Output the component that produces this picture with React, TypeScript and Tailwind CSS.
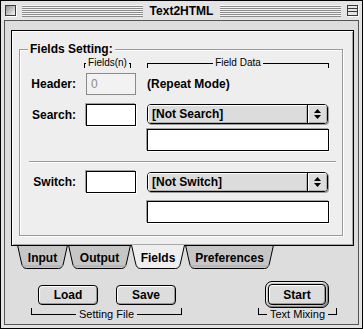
import React from 'react'

const sans = "font-['Liberation_Sans',Arial,sans-serif]"

function CloseBox() {
  return (
    <div className="w-[11px] h-[11px] shrink-0 border border-[#3a3a3a] bg-[linear-gradient(135deg,#8e8e8e,#f6f6f6)] shadow-[1px_1px_0_#fff]" />
  )
}

function CollapseBox() {
  return (
    <div className="w-[11px] h-[11px] shrink-0 border border-[#3a3a3a] bg-[#e4e4e4] shadow-[1px_1px_0_#fff] flex flex-col">
      <div className="h-[3px] border-b border-[#3a3a3a]" />
      <div className="h-[3px] border-b border-[#3a3a3a]" />
    </div>
  )
}

function Stripes() {
  return (
    <div className="flex-1 h-[12px] bg-[repeating-linear-gradient(to_bottom,#f6f6f6_0px,#f6f6f6_1px,#8a8a8a_1px,#8a8a8a_2px)]" />
  )
}

// label with a line on each side, ends ticked downward
function TopBracket({ label, className }: { label: string; className: string }) {
  return (
    <div className={`flex items-start h-[12px] ${className}`}>
      <div className="flex-1 mt-[6px] h-[5px] border-l border-t border-black" />
      <span className="px-[2px] text-[10px] leading-[12px] whitespace-nowrap">{label}</span>
      <div className="flex-1 mt-[6px] h-[5px] border-r border-t border-black" />
    </div>
  )
}

// label with a line on each side, ends ticked upward
function BottomBracket({ label }: { label: string }) {
  return (
    <div className="flex items-start h-[12px]">
      <div className="flex-1 h-[7px] border-l border-b border-black" />
      <span className="px-[3px] text-[11px] leading-[12px]">{label}</span>
      <div className="flex-1 h-[7px] border-r border-b border-black" />
    </div>
  )
}

function Field({ className = '' }: { className?: string }) {
  return (
    <div className={`h-[22px] border border-black bg-white shadow-[-1px_-1px_0_#a0a0a0,1px_1px_0_#fff] ${className}`} />
  )
}

function Popup({ label, className = '' }: { label: string; className?: string }) {
  return (
    <div className={`w-[181px] h-[20px] rounded-[4px] border border-black flex overflow-hidden shadow-[1px_1px_0_#9a9a9a] ${className}`}>
      <div className="flex-1 bg-[#dcdcdc] shadow-[inset_1px_1px_0_#fff,inset_-1px_-1px_0_#b0b0b0] text-[12px] font-bold leading-[18px] pl-[4px]">
        {label}
      </div>
      <div className="w-[20px] border-l border-black bg-[#dcdcdc] shadow-[inset_1px_1px_0_#fff,inset_-1px_-1px_0_#b0b0b0] flex items-center justify-center">
        <svg width="7" height="10" viewBox="0 0 7 10">
          <polygon points="0,4 3.5,0 7,4" fill="#000" />
          <polygon points="0,6 3.5,10 7,6" fill="#000" />
        </svg>
      </div>
    </div>
  )
}

function Btn({ label, className = '' }: { label: string; className?: string }) {
  return (
    <div className={`rounded-[4px] border border-black bg-[#dddddd] shadow-[inset_1px_1px_0_#fff,inset_-1px_-1px_0_#9a9a9a] flex items-center justify-center text-[12px] font-bold leading-none ${className}`}>
      {label}
    </div>
  )
}

function Tab({ label, w, active = false, className }: { label: string; w: number; active?: boolean; className: string }) {
  const h = 24
  const d = `M0.5,0 L4.5,${h - 6} Q5.5,${h - 0.5} 9.5,${h - 0.5} L${w - 9.5},${h - 0.5} Q${w - 5.5},${h - 0.5} ${w - 4.5},${h - 6} L${w - 0.5},0`
  return (
    <div className={`relative h-[24px] shrink-0 flex items-center justify-center pt-[2px] ${className}`}>
      <svg className="absolute inset-0" width={w} height={h} viewBox={`0 0 ${w} ${h}`}>
        <path d={d + ' Z'} fill={active ? '#eeeeee' : '#c6c6c6'} stroke="none" />
        <path d={d} fill="none" stroke="#000" strokeWidth="1" />
        {!active && <line x1="0" y1="0.5" x2={w} y2="0.5" stroke="#000" strokeWidth="1" />}
        {!active && <path d={`M5,${h - 3} L${w - 5},${h - 3}`} stroke="#a8a8a8" strokeWidth="1" />}
      </svg>
      <span className="relative text-[12px] font-bold leading-none">{label}</span>
    </div>
  )
}

export default function App() {
  return (
    <div className={`w-[363px] h-[329px] border border-black bg-[#e4e4e4] flex flex-col text-black select-none ${sans}`}>
      {/* Title bar */}
      <div className="h-[19px] shrink-0 flex items-center px-[4px] gap-[6px]">
        <CloseBox />
        <Stripes />
        <span className="text-[12px] font-bold leading-none px-[1px]">Text2HTML</span>
        <Stripes />
        <CollapseBox />
      </div>

      {/* Window body */}
      <div className="flex-1 mx-[3px] mb-[3px] border border-[#555] bg-[#dddddd] flex flex-col pl-[6px] pr-[4px] pt-[9px]">
        {/* Tab panel */}
        <div className="h-[216px] shrink-0 border border-black bg-[#eeeeee] shadow-[inset_1px_1px_0_#fff,inset_-1px_-1px_0_#a8a8a8] flex flex-col">
          <div className="relative mt-[18px] ml-[7px] mr-[10px] h-[187px] border border-[#9a9a9a] shadow-[1px_1px_0_#fff,inset_1px_1px_0_#fff] flex flex-col">
            <span className="absolute -top-[8px] left-[8px] px-[2px] bg-[#eeeeee] text-[12px] font-bold leading-[14px]">
              Fields Setting:
            </span>

            <div className="flex mt-[7px]">
              <div className="w-[64px]" />
              <TopBracket label="Fields(n)" className="w-[47px]" />
              <div className="w-[16px]" />
              <TopBracket label="Field Data" className="w-[182px]" />
            </div>

            {/* Header */}
            <div className="flex items-center h-[22px] mt-[4px]">
              <span className="w-[56px] text-right text-[12px] font-bold">Header:</span>
              <div className="ml-[10px] w-[50px] h-[22px] border border-[#8a8a8a] bg-[#f2f2f2] text-[12px] text-[#8a8a8a] leading-[20px] pl-[4px]">
                0
              </div>
              <span className="ml-[11px] text-[12px] font-bold">(Repeat Mode)</span>
            </div>

            {/* Search */}
            <div className="flex items-start mt-[9px]">
              <span className="w-[56px] text-right text-[12px] font-bold leading-[22px]">Search:</span>
              <Field className="ml-[10px] w-[50px]" />
              <Popup label="[Not Search]" className="ml-[11px]" />
            </div>
            <Field className="ml-[127px] mt-[3px] w-[182px]" />

            <div className="mt-[10px] ml-[9px] mr-[6px] border-t border-[#9a9a9a] border-b border-b-white" />

            {/* Switch */}
            <div className="flex items-start mt-[8px]">
              <span className="w-[56px] text-right text-[12px] font-bold leading-[22px]">Switch:</span>
              <Field className="ml-[10px] w-[50px]" />
              <Popup label="[Not Switch]" className="ml-[11px] mt-[1px]" />
            </div>
            <Field className="ml-[127px] mt-[8px] w-[182px]" />
          </div>
        </div>

        {/* Tabs */}
        <div className="flex -mt-px pl-[6px]">
          <Tab label="Input" w={51} className="w-[51px]" />
          <Tab label="Output" w={63} className="w-[63px]" />
          <Tab label="Fields" w={54} active className="w-[54px]" />
          <Tab label="Preferences" w={89} className="w-[89px]" />
        </div>

        {/* Bottom buttons */}
        <div className="flex mt-[12px] ml-[20px]">
          <div className="w-[151px] flex flex-col">
            <div className="h-[27px] flex items-start gap-[18px] pl-[7px] pt-[4px]">
              <Btn label="Load" className="w-[60px] h-[20px]" />
              <Btn label="Save" className="w-[60px] h-[20px]" />
            </div>
            <BottomBracket label="Setting File" />
          </div>
          <div className="ml-[76px] w-[79px] flex flex-col">
            <div className="h-[27px] pl-[7px]">
              <div className="w-[64px] h-[27px] rounded-[7px] border border-black bg-[#c4c4c4] shadow-[inset_1px_1px_0_#eee,inset_-1px_-1px_0_#888] p-[2px]">
                <Btn label="Start" className="w-full h-full" />
              </div>
            </div>
            <BottomBracket label="Text Mixing" />
          </div>
        </div>
      </div>
    </div>
  )
}
